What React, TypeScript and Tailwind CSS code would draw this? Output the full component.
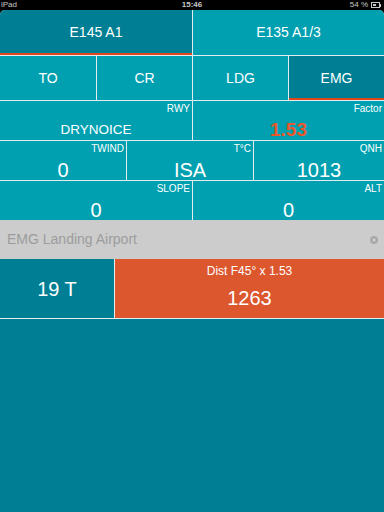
import React from 'react';

const font = { fontFamily: '"Liberation Sans", Arial, sans-serif' };

const Field: React.FC<{ label: string; value: string; valueClass?: string }> = ({ label, value, valueClass = 'text-[20px] text-white' }) => (
  <div className="flex min-h-0 flex-col overflow-hidden bg-[#00a0b0]">
    <div className="pr-[2px] pt-[2px] text-right text-[10px] leading-[12px] text-white">{label}</div>
    <div className={`mt-[5px] text-center leading-[20px] ${valueClass}`}>{value}</div>
  </div>
);

export default function App() {
  return (
    <div className="flex h-[512px] w-[384px] flex-col overflow-hidden bg-black" style={font}>
      {/* status bar */}
      <div className="relative flex h-[10px] items-center justify-between px-[1px] text-[8px] leading-[10px] text-[#c8c8c8]">
        <span>iPad</span>
        <span className="absolute left-1/2 -translate-x-1/2 font-bold">15:46</span>
        <div className="flex items-center gap-[3px] pr-[2px]">
          <span>54 %</span>
          <div className="flex items-center">
            <div className="h-[6px] w-[9px] border border-[#c8c8c8] p-[1px]">
              <div className="h-full w-[55%] bg-[#c8c8c8]" />
            </div>
            <div className="h-[3px] w-[1px] bg-[#c8c8c8]" />
          </div>
        </div>
      </div>

      <div className="flex flex-1 flex-col gap-px overflow-hidden rounded-t-[5px] bg-[#e3ecee]">
        {/* aircraft tabs */}
        <div className="grid h-[45px] grid-cols-[192px_1fr] gap-px">
          <div className="flex items-center justify-center border-b-2 border-[#e0461c] bg-[#007f94] pt-[2px] text-[14px] text-white">E145 A1</div>
          <div className="flex items-center justify-center bg-[#00a0b0] text-[14px] text-white">E135 A1/3</div>
        </div>

        {/* phase tabs */}
        <div className="grid h-[44px] grid-cols-[96px_95px_95px_1fr] gap-px text-[14px] text-white">
          <div className="flex items-center justify-center bg-[#00a0b0]">TO</div>
          <div className="flex items-center justify-center bg-[#00a0b0]">CR</div>
          <div className="flex items-center justify-center bg-[#00a0b0]">LDG</div>
          <div className="flex items-center justify-center border-b-2 border-[#e0461c] bg-[#007f94] pt-[2px]">EMG</div>
        </div>

        <div className="grid h-[39px] grid-cols-[192px_1fr] gap-px">
          <Field label="RWY" value="DRYNOICE" valueClass="text-[13.5px] text-white" />
          <Field label="Factor" value="1.53" valueClass="text-[19px] font-bold text-[#e8582c]" />
        </div>

        <div className="grid h-[39px] grid-cols-[126px_126px_1fr] gap-px">
          <Field label="TWIND" value="0" />
          <Field label="T°C" value="ISA" />
          <Field label="QNH" value="1013" />
        </div>

        <div className="flex flex-col">
          <div className="grid h-[39px] grid-cols-[192px_1fr] gap-px">
            <Field label="SLOPE" value="0" />
            <Field label="ALT" value="0" />
          </div>

          {/* airport input */}
          <div className="flex h-[39px] items-center justify-between bg-[#cccccc] pl-[7px] pr-[6px]">
            <span className="text-[14px] text-[#9c9c9c]">EMG Landing Airport</span>
            <svg width="8" height="8" viewBox="0 0 8 8">
              <circle cx="4" cy="4" r="4" fill="#a8a8a8" />
              <path d="M2.6 2.6 L5.4 5.4 M5.4 2.6 L2.6 5.4" stroke="#dcdcdc" strokeWidth="1" />
            </svg>
          </div>

          {/* result */}
          <div className="grid h-[59px] grid-cols-[114px_1fr] gap-px bg-[#e3ecee]">
            <div className="flex items-center justify-center bg-[#007f94] text-[20px] text-white">19 T</div>
            <div className="flex flex-col items-center bg-[#dc572e] text-white">
              <div className="mt-[5px] text-[12px] leading-[14px]">Dist F45° x 1.53</div>
              <div className="mt-[8px] text-[20px] leading-[24px]">1263</div>
            </div>
          </div>
        </div>

        <div className="flex-1 bg-[#007f94]" />
      </div>
    </div>
  );
}
